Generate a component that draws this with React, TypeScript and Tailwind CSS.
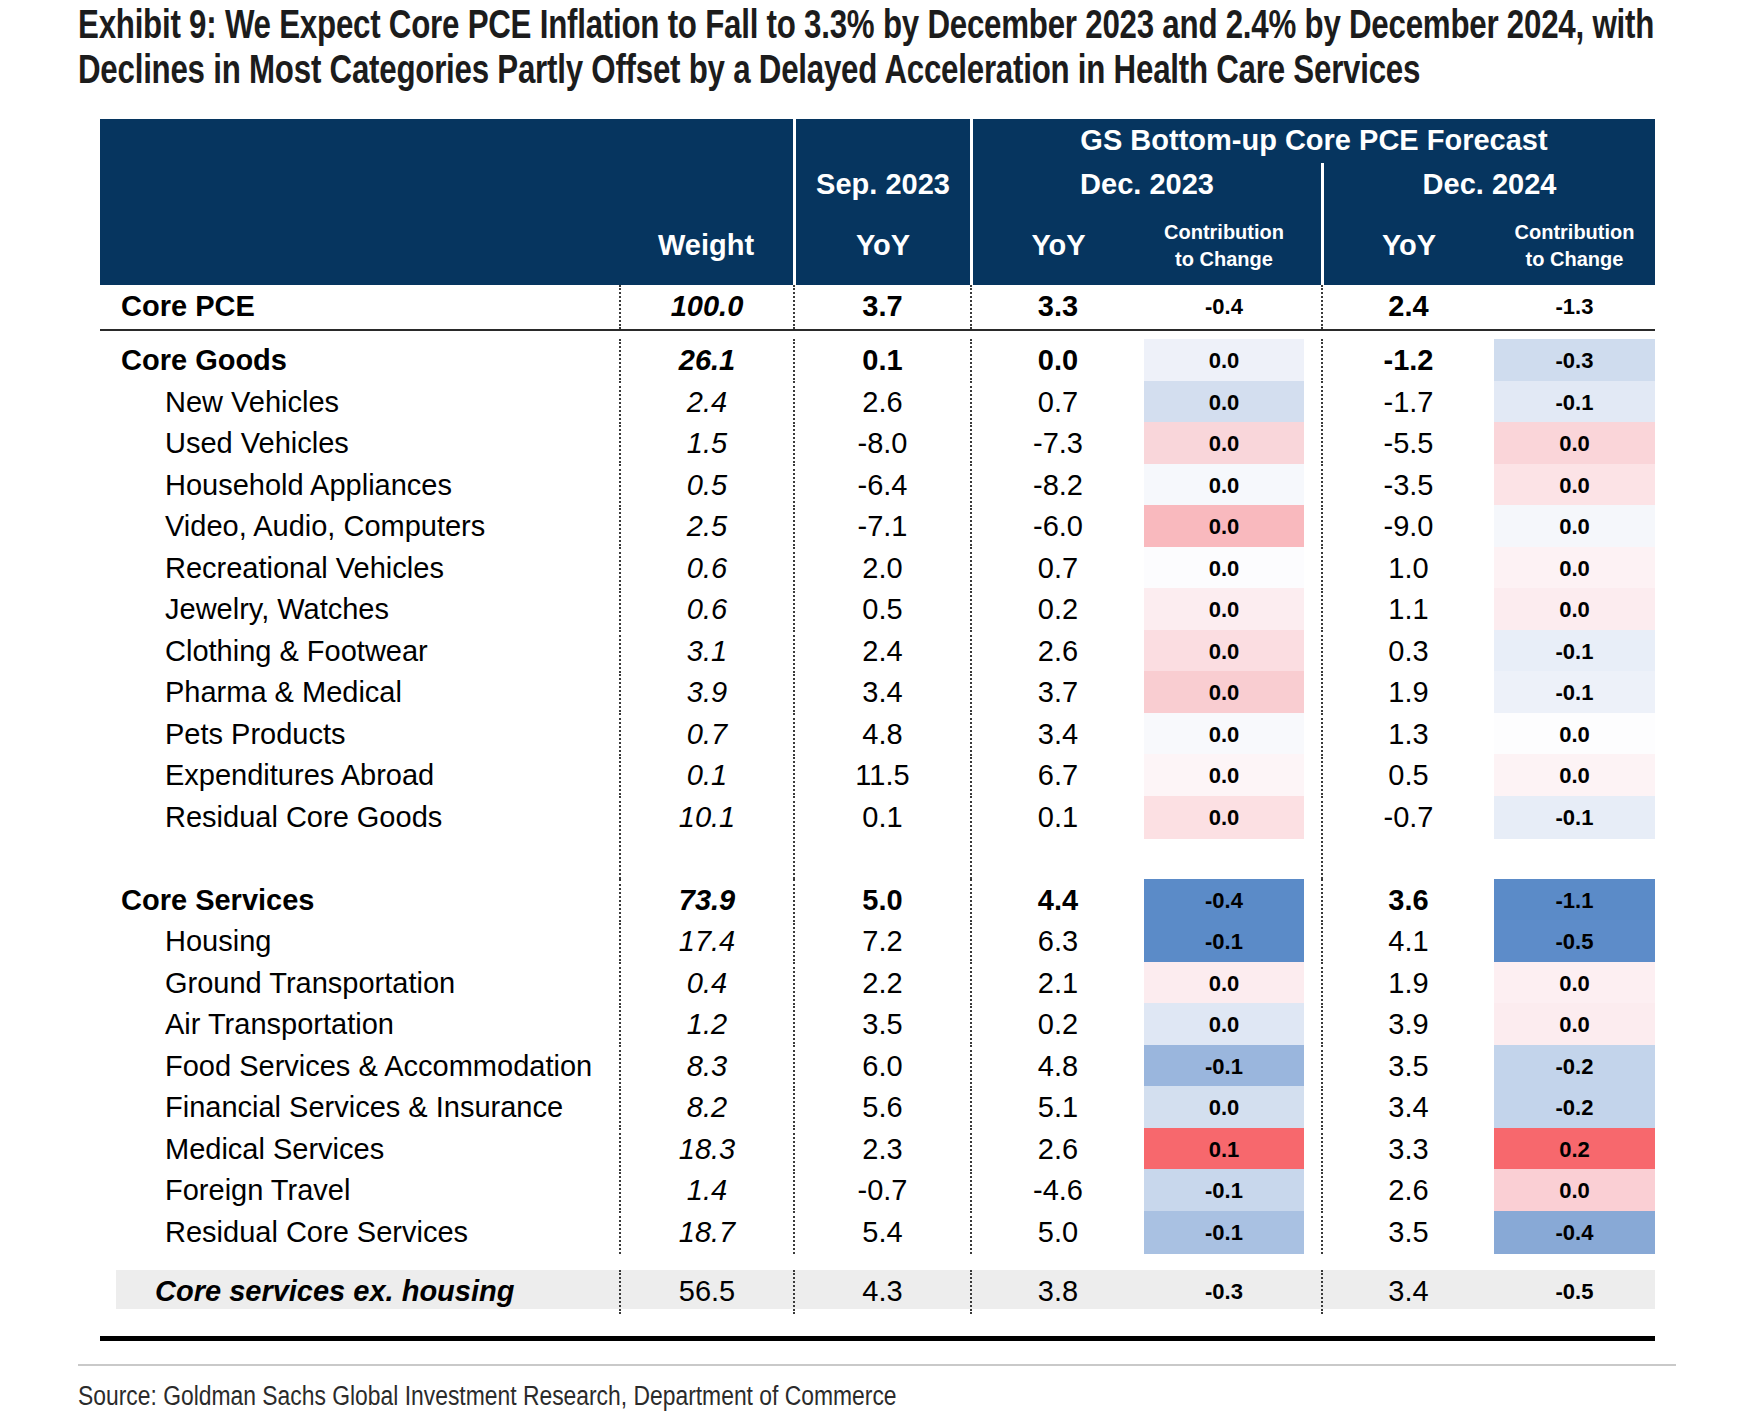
const COLS = "grid grid-cols-[519px_174px_177px_174px_177px_173px_161px]";
const DOT = "border-l-2 border-dotted border-[#3a3a3a]";

type Row = {
  label: string;
  w: string;
  sep: string;
  d23: string;
  c23: string;
  bg23: string;
  d24: string;
  c24: string;
  bg24: string;
  head?: boolean;
};

const goods: Row[] = [
  { label: "Core Goods", w: "26.1", sep: "0.1", d23: "0.0", c23: "0.0", bg23: "bg-[#eef1f9]", d24: "-1.2", c24: "-0.3", bg24: "bg-[#cfdcee]", head: true },
  { label: "New Vehicles", w: "2.4", sep: "2.6", d23: "0.7", c23: "0.0", bg23: "bg-[#d3deef]", d24: "-1.7", c24: "-0.1", bg24: "bg-[#e2e9f5]" },
  { label: "Used Vehicles", w: "1.5", sep: "-8.0", d23: "-7.3", c23: "0.0", bg23: "bg-[#f9d6da]", d24: "-5.5", c24: "0.0", bg24: "bg-[#fad5d9]" },
  { label: "Household Appliances", w: "0.5", sep: "-6.4", d23: "-8.2", c23: "0.0", bg23: "bg-[#f6f8fc]", d24: "-3.5", c24: "0.0", bg24: "bg-[#fce3e6]" },
  { label: "Video, Audio, Computers", w: "2.5", sep: "-7.1", d23: "-6.0", c23: "0.0", bg23: "bg-[#f9b9be]", d24: "-9.0", c24: "0.0", bg24: "bg-[#f5f7fb]" },
  { label: "Recreational Vehicles", w: "0.6", sep: "2.0", d23: "0.7", c23: "0.0", bg23: "bg-[#fcfcfe]", d24: "1.0", c24: "0.0", bg24: "bg-[#fdf2f4]" },
  { label: "Jewelry, Watches", w: "0.6", sep: "0.5", d23: "0.2", c23: "0.0", bg23: "bg-[#fcedf0]", d24: "1.1", c24: "0.0", bg24: "bg-[#fcecef]" },
  { label: "Clothing & Footwear", w: "3.1", sep: "2.4", d23: "2.6", c23: "0.0", bg23: "bg-[#fbdde1]", d24: "0.3", c24: "-0.1", bg24: "bg-[#e8eef8]" },
  { label: "Pharma & Medical", w: "3.9", sep: "3.4", d23: "3.7", c23: "0.0", bg23: "bg-[#f9cdd1]", d24: "1.9", c24: "-0.1", bg24: "bg-[#edf1f9]" },
  { label: "Pets Products", w: "0.7", sep: "4.8", d23: "3.4", c23: "0.0", bg23: "bg-[#f8f9fc]", d24: "1.3", c24: "0.0", bg24: "bg-[#fdfdfe]" },
  { label: "Expenditures Abroad", w: "0.1", sep: "11.5", d23: "6.7", c23: "0.0", bg23: "bg-[#fdf5f7]", d24: "0.5", c24: "0.0", bg24: "bg-[#fdf3f5]" },
  { label: "Residual Core Goods", w: "10.1", sep: "0.1", d23: "0.1", c23: "0.0", bg23: "bg-[#fce0e3]", d24: "-0.7", c24: "-0.1", bg24: "bg-[#e7edf7]" },
];

const services: Row[] = [
  { label: "Core Services", w: "73.9", sep: "5.0", d23: "4.4", c23: "-0.4", bg23: "bg-[#5b8bc8]", d24: "3.6", c24: "-1.1", bg24: "bg-[#5b8bc8]", head: true },
  { label: "Housing", w: "17.4", sep: "7.2", d23: "6.3", c23: "-0.1", bg23: "bg-[#5b8bc8]", d24: "4.1", c24: "-0.5", bg24: "bg-[#5d8cc9]" },
  { label: "Ground Transportation", w: "0.4", sep: "2.2", d23: "2.1", c23: "0.0", bg23: "bg-[#fcecef]", d24: "1.9", c24: "0.0", bg24: "bg-[#fdeff2]" },
  { label: "Air Transportation", w: "1.2", sep: "3.5", d23: "0.2", c23: "0.0", bg23: "bg-[#dfe7f4]", d24: "3.9", c24: "0.0", bg24: "bg-[#fcecef]" },
  { label: "Food Services & Accommodation", w: "8.3", sep: "6.0", d23: "4.8", c23: "-0.1", bg23: "bg-[#9ab6dd]", d24: "3.5", c24: "-0.2", bg24: "bg-[#c3d4eb]" },
  { label: "Financial Services & Insurance", w: "8.2", sep: "5.6", d23: "5.1", c23: "0.0", bg23: "bg-[#d3dfef]", d24: "3.4", c24: "-0.2", bg24: "bg-[#c3d4eb]" },
  { label: "Medical Services", w: "18.3", sep: "2.3", d23: "2.6", c23: "0.1", bg23: "bg-[#f7686d]", d24: "3.3", c24: "0.2", bg24: "bg-[#f7686d]" },
  { label: "Foreign Travel", w: "1.4", sep: "-0.7", d23: "-4.6", c23: "-0.1", bg23: "bg-[#c8d7ec]", d24: "2.6", c24: "0.0", bg24: "bg-[#facfd4]" },
  { label: "Residual Core Services", w: "18.7", sep: "5.4", d23: "5.0", c23: "-0.1", bg23: "bg-[#a9c1e2]", d24: "3.5", c24: "-0.4", bg24: "bg-[#88a9d6]" },
];

function DataRow({ r }: { r: Row }) {
  const num = r.head ? "font-bold" : "";
  return (
    <div className={`${COLS} h-[41.5px]`}>
      <div className={`flex items-center ${r.head ? "pl-[21px] font-bold" : "pl-[65px]"}`}>{r.label}</div>
      <div className={`flex items-center justify-center italic ${num} ${DOT}`}>{r.w}</div>
      <div className={`flex items-center justify-center ${num} ${DOT}`}>{r.sep}</div>
      <div className={`flex items-center justify-center ${num} ${DOT}`}>{r.d23}</div>
      <div className="flex pr-[17px]">
        <div className={`flex flex-1 items-center justify-center text-[22px] font-bold ${r.bg23}`}>{r.c23}</div>
      </div>
      <div className={`flex items-center justify-center ${num} ${DOT}`}>{r.d24}</div>
      <div className={`flex items-center justify-center text-[22px] font-bold ${r.bg24}`}>{r.c24}</div>
    </div>
  );
}

function BlankRow() {
  return (
    <div className={`${COLS} h-[41.5px]`}>
      <div />
      <div className={DOT} />
      <div className={DOT} />
      <div className={DOT} />
      <div />
      <div className={DOT} />
      <div />
    </div>
  );
}

export default function App() {
  return (
    <div className="w-[1746px] min-h-[1426px] overflow-hidden bg-white text-black font-['Liberation_Sans',Arial,sans-serif]">
      <h1 className="pl-[78px] pt-[2px] text-[40px] leading-[44.5px] font-bold text-[#1c1c1c]">
        <div className="origin-left scale-x-[0.782] whitespace-nowrap tracking-[-0.3px]">
          Exhibit 9: We Expect Core PCE Inflation to Fall to 3.3% by December 2023 and 2.4% by December 2024, with
          <br />
          Declines in Most Categories Partly Offset by a Delayed Acceleration in Health Care Services
        </div>
      </h1>

      <div className="ml-[100px] mt-[28px] w-[1555px] text-[29px]">
        {/* header */}
        <div className={`${COLS} grid-rows-[44px_44px_78px] bg-[#06355f] font-bold text-white`}>
          <div className="row-span-3" />
          <div className="row-span-3 flex flex-col justify-end">
            <div className="flex h-[78px] items-center justify-center">Weight</div>
          </div>
          <div className="row-span-3 flex flex-col border-l-[3px] border-white">
            <div className="h-[44px]" />
            <div className="flex h-[44px] items-center justify-center">Sep. 2023</div>
            <div className="flex h-[78px] items-center justify-center">YoY</div>
          </div>
          <div className="col-span-4 flex items-center justify-center border-l-[3px] border-white">
            GS Bottom-up Core PCE Forecast
          </div>
          <div className="col-span-2 flex items-center justify-center border-l-[3px] border-white">Dec. 2023</div>
          <div className="col-span-2 flex items-center justify-center border-l-[3px] border-white">Dec. 2024</div>
          <div className="flex items-center justify-center border-l-[3px] border-white">YoY</div>
          <div className="flex flex-col items-center justify-center pr-[17px] text-[20px] leading-[27px]">
            <span>Contribution</span>
            <span>to Change</span>
          </div>
          <div className="flex items-center justify-center border-l-[3px] border-white">YoY</div>
          <div className="flex flex-col items-center justify-center text-[20px] leading-[27px]">
            <span>Contribution</span>
            <span>to Change</span>
          </div>
        </div>

        {/* Core PCE */}
        <div className={`${COLS} h-[40px] font-bold`}>
          <div className="flex items-center pl-[21px]">Core PCE</div>
          <div className={`flex items-center justify-center italic ${DOT}`}>100.0</div>
          <div className={`flex items-center justify-center ${DOT}`}>3.7</div>
          <div className={`flex items-center justify-center ${DOT}`}>3.3</div>
          <div className="flex items-center justify-center pr-[17px] text-[22px]">-0.4</div>
          <div className={`flex items-center justify-center ${DOT}`}>2.4</div>
          <div className="flex items-center justify-center text-[22px]">-1.3</div>
        </div>
        <div className="mt-[4px] h-[2px] bg-[#2a2a2a]" />
        <div className="mt-[8px]">
          {goods.map((r) => (
            <DataRow key={r.label} r={r} />
          ))}
          <BlankRow />
          {services.map((r) => (
            <DataRow key={r.label} r={r} />
          ))}
        </div>

        {/* ex housing */}
        <div className="mt-[18px] ml-[16px] grid h-[39px] grid-cols-[503px_174px_177px_174px_177px_173px_161px] bg-[#ededed]">
          <div className="flex items-center pl-[39px] font-bold italic">Core services ex. housing</div>
          <div className={`flex items-center justify-center ${DOT}`}>56.5</div>
          <div className={`flex items-center justify-center ${DOT}`}>4.3</div>
          <div className={`flex items-center justify-center ${DOT}`}>3.8</div>
          <div className="flex items-center justify-center pr-[17px] text-[22px] font-bold">-0.3</div>
          <div className={`flex items-center justify-center ${DOT}`}>3.4</div>
          <div className="flex items-center justify-center text-[22px] font-bold">-0.5</div>
        </div>

        <div className="mt-[27px] h-[5px] bg-black" />
      </div>

      <div className="ml-[78px] mt-[23px] h-[2px] w-[1598px] bg-[#c9c9c9]" />
      <p className="ml-[78px] mt-[14px] text-[27px] leading-[32px] text-[#2b2b2b]">
        <span className="block origin-left scale-x-[0.847] whitespace-nowrap">
          Source: Goldman Sachs Global Investment Research, Department of Commerce
        </span>
      </p>
    </div>
  );
}
